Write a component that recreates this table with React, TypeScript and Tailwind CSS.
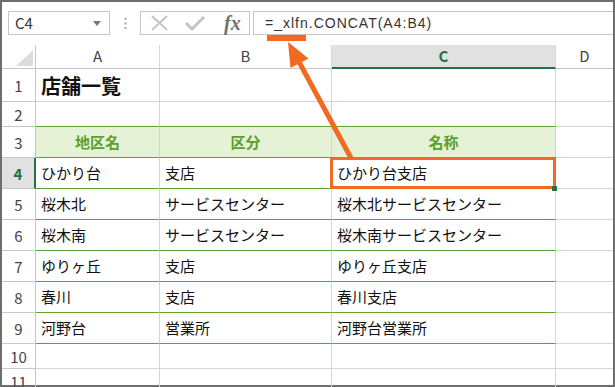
import type React from 'react';

type Row = { num: string; h: string; cells: [string, string, string] };

const rows: Row[] = [
  { num: '1', h: 'h-[33px]', cells: ['店舗一覧', '', ''] },
  { num: '2', h: 'h-[25px]', cells: ['', '', ''] },
  { num: '3', h: 'h-[31px]', cells: ['地区名', '区分', '名称'] },
  { num: '4', h: 'h-[31px]', cells: ['ひかり台', '支店', 'ひかり台支店'] },
  { num: '5', h: 'h-[31px]', cells: ['桜木北', 'サービスセンター', '桜木北サービスセンター'] },
  { num: '6', h: 'h-[31px]', cells: ['桜木南', 'サービスセンター', '桜木南サービスセンター'] },
  { num: '7', h: 'h-[31px]', cells: ['ゆりヶ丘', '支店', 'ゆりヶ丘支店'] },
  { num: '8', h: 'h-[31px]', cells: ['春川', '支店', '春川支店'] },
  { num: '9', h: 'h-[31px]', cells: ['河野台', '営業所', '河野台営業所'] },
  { num: '10', h: 'h-[25px]', cells: ['', '', ''] },
  { num: '11', h: 'flex-1', cells: ['', '', ''] },
];

const colWidths = ['w-[124px]', 'w-[172px]', 'w-[224px]'];

const Toolbar: React.FC = () => (
  <div className="flex h-[43px] shrink-0 items-start pt-[9px] pl-[6px]">
    <div className="flex h-[24px] w-[102px] items-center justify-between border border-[#c6c6c6] pl-[6px] pr-[8px] text-[15px] text-[#333]">
      <span>C4</span>
      <svg width="8" height="5" viewBox="0 0 8 5">
        <path d="M0 0 L8 0 L4 5 Z" fill="#777" />
      </svg>
    </div>
    <div className="flex h-[24px] w-[30px] items-center justify-center">
      <svg width="3" height="11" viewBox="0 0 3 11">
        <rect x="0.5" y="0" width="2" height="2" fill="#a8a8a8" />
        <rect x="0.5" y="4.5" width="2" height="2" fill="#a8a8a8" />
        <rect x="0.5" y="9" width="2" height="2" fill="#a8a8a8" />
      </svg>
    </div>
    <div className="flex h-[24px] w-[110px] items-center border border-[#c6c6c6]">
      <svg className="ml-[10px]" width="17" height="16" viewBox="0 0 17 16">
        <path d="M1 1 L16 15 M16 1 L1 15" stroke="#c4c4c4" strokeWidth="2" />
      </svg>
      <svg className="ml-[17px]" width="20" height="16" viewBox="0 0 20 16">
        <path d="M1 8 L7 14 L19 2" stroke="#c4c4c4" strokeWidth="3" fill="none" />
      </svg>
      <span className="ml-[19px] font-['Liberation_Serif',serif] text-[20px] font-bold italic leading-none text-[#707070]">
        fx
      </span>
    </div>
    <div className="ml-[3px] flex h-[24px] flex-1 items-center border border-r-0 border-[#c6c6c6] pl-[11px] font-['Liberation_Sans',sans-serif] text-[14px] tracking-[1px] text-[#333]">
      =_xlfn.CONCAT(A4:B4)
    </div>
  </div>
);

const ColumnHeader: React.FC = () => (
  <div className="flex h-[24px] shrink-0 text-[15px] text-[#444]">
    <div className="relative w-[34px] shrink-0 border-r border-b border-[#c6c6c6]">
      <svg className="absolute top-0 left-0" width="34" height="24" viewBox="0 0 34 24">
        <path d="M31 5 L31 21 L14 21 Z" fill="#dcdcdc" />
      </svg>
    </div>
    <div className="flex w-[124px] shrink-0 items-center justify-center border-r border-b border-r-[#d8d8d8] border-b-[#c6c6c6]">A</div>
    <div className="flex w-[172px] shrink-0 items-center justify-center border-r border-b border-r-[#d8d8d8] border-b-[#c6c6c6]">B</div>
    <div className="flex w-[224px] shrink-0 items-center justify-center border-r border-b-2 border-r-[#d8d8d8] border-b-[#217346] bg-[#e1e1e1] font-bold text-[#217346]">
      C
    </div>
    <div className="flex flex-1 items-center justify-center border-b border-[#c6c6c6]">D</div>
  </div>
);

const SheetRow: React.FC<{ row: Row }> = ({ row }) => {
  const n = Number(row.num);
  const isHead = n === 3;
  const isTitle = n === 1;
  const isSelected = n === 4;
  const greenBottom = n >= 2 && n <= 9;

  return (
    <div className={`flex shrink-0 ${row.h}`}>
      <div
        className={
          isSelected
            ? 'flex w-[34px] shrink-0 items-center justify-center border-r-2 border-b border-r-[#217346] border-b-[#c6c6c6] bg-[#e1e1e1] pt-[2px] text-[15px] font-bold text-[#217346]'
            : 'flex w-[34px] shrink-0 items-center justify-center border-r border-b border-[#c6c6c6] pt-[2px] text-[15px] text-[#444]'
        }
      >
        {row.num}
      </div>
      {row.cells.map((text, i) => (
        <div
          key={i}
          className={`relative flex shrink-0 items-center border-r border-b border-r-[#d4d4d4] ${colWidths[i]} ${
            greenBottom ? 'border-b-[#5fa22f]' : 'border-b-[#d4d4d4]'
          } ${isHead ? 'justify-center bg-[#e5f2d5] pt-[1px] text-[15px] font-bold text-[#5d9f2e]' : 'pl-[5px] text-[15px] text-[#111]'} ${
            isTitle ? 'pt-[1px] text-[20px] font-bold' : ''
          }`}
        >
          {text}
          {isSelected && i === 2 && (
            <>
              <div className="absolute top-[-1px] right-[-1px] bottom-[-1px] left-[-2px] z-10 border-[3px] border-[#f26a21]" />
              <div className="absolute right-[-2px] bottom-[-3px] z-20 h-[5px] w-[5px] bg-[#217346]" />
            </>
          )}
        </div>
      ))}
      <div className="flex-1 border-b border-[#d4d4d4]" />
    </div>
  );
};

export default function App() {
  return (
    <div className="relative h-[387px] w-[615px] overflow-hidden bg-white font-['Noto_Sans_CJK_JP',sans-serif]">
      <div className="flex h-full w-full flex-col border-2 border-[#6e6e6e]">
        <Toolbar />
        <ColumnHeader />
        {rows.map((row) => (
          <SheetRow key={row.num} row={row} />
        ))}
      </div>
      <svg className="pointer-events-none absolute inset-0 z-30" width="615" height="387" viewBox="0 0 615 387">
        <rect x="267" y="35" width="39" height="6" fill="#f26a21" />
        <line x1="351" y1="158" x2="298" y2="60" stroke="#f26a21" strokeWidth="5" />
        <path d="M288 42 L308.5 58.5 L290.5 68 Z" fill="#f26a21" />
      </svg>
    </div>
  );
}
